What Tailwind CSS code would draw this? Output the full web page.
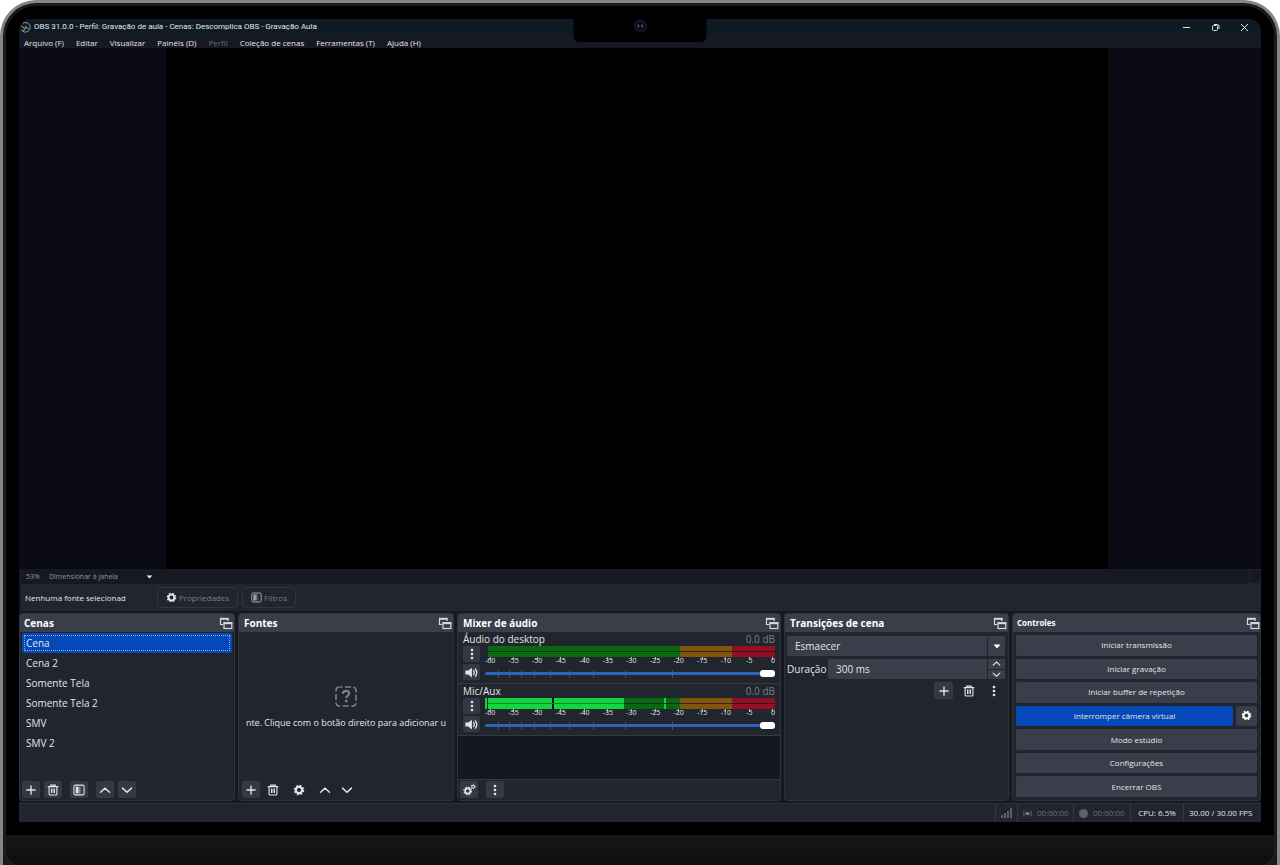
<!DOCTYPE html>
<html lang="pt-BR">
<head>
    <meta charset="UTF-8">
    <meta name="viewport" content="width=device-width, initial-scale=1.0">
    <title>OBS 31.0.0 - Perfil: Gravação de aula</title>
    <script src="https://cdn.jsdelivr.net/npm/@tailwindcss/browser@4"></script>
</head>
<body class="bg-white font-['Open_Sans','Noto_Sans',sans-serif] text-[10px] leading-4 text-[#e4e5e8]">
    <!-- Icon set -->
    <svg class="hidden">
        <symbol id="plus" viewBox="0 0 16 16"><path d="M8 2.5v11M2.5 8h11" stroke="currentColor" stroke-width="1.8" stroke-linecap="round" fill="none"/></symbol>
        <symbol id="trash" viewBox="0 0 16 16"><path d="M1.500 3.500h13M5 3V1.500h6V3M2.800 4v9.200q0 1.500 1.500 1.500h7.400q1.500 0 1.500-1.500V4" stroke="currentColor" stroke-width="1.500" stroke-linecap="round" fill="none"/><path d="M6 6v6M8 6v6M10 6v6" stroke="currentColor" stroke-width="1.300" fill="none"/></symbol>
        <symbol id="filter" viewBox="0 0 16 16"><rect x="1.200" y="1.500" width="13.600" height="13" rx="2" fill="none" stroke="currentColor" stroke-width="1.400"/><path d="M3.500 3.500h3.500v9H3.500z" fill="currentColor"/><path d="M7 3.500h2v9H7z" fill="currentColor" opacity=".6"/><path d="M9 3.500h2v9H9z" fill="currentColor" opacity=".25"/></symbol>
        <symbol id="up" viewBox="0 0 16 16"><path d="M2 11l6-5.500 6 5.500" stroke="currentColor" stroke-width="1.900" stroke-linecap="round" fill="none"/></symbol>
        <symbol id="down" viewBox="0 0 16 16"><path d="M2 5.500 8 11l6-5.500" stroke="currentColor" stroke-width="1.900" stroke-linecap="round" fill="none"/></symbol>
        <symbol id="gear" viewBox="0 0 16 16"><circle cx="8" cy="8" r="4.200" fill="none" stroke="currentColor" stroke-width="2.800"/><circle cx="8" cy="8" r="6" fill="none" stroke="currentColor" stroke-width="2" stroke-dasharray="2.600 2.112"/></symbol>
        <symbol id="gears" viewBox="0 0 16 16"><circle cx="5.800" cy="9.800" r="3.200" fill="none" stroke="currentColor" stroke-width="2"/><circle cx="5.800" cy="9.800" r="4.700" fill="none" stroke="currentColor" stroke-width="1.400" stroke-dasharray="1.900 1.791"/><circle cx="12.500" cy="4.500" r="1.700" fill="none" stroke="currentColor" stroke-width="1.300"/><circle cx="12.500" cy="4.500" r="2.700" fill="none" stroke="currentColor" stroke-width="1" stroke-dasharray="1.200 1.627"/></symbol>
        <symbol id="dots" viewBox="0 0 16 16"><g fill="currentColor"><circle cx="8" cy="2.700" r="1.800"/><circle cx="8" cy="8" r="1.800"/><circle cx="8" cy="13.300" r="1.800"/></g></symbol>
        <symbol id="speaker" viewBox="0 0 16 16"><path d="M.5 5.500H4L8.500 2v12L4 10.500H.5z" fill="currentColor"/><path d="M10.500 5.500q1.700 2.500 0 5M12.800 3.500q3.200 4.500 0 9" stroke="currentColor" stroke-width="1.600" stroke-linecap="round" fill="none"/></symbol>
        <symbol id="popout" viewBox="0 0 14 13"><path d="M4 7.500H1.500V1.500H9V4" fill="none" stroke="currentColor" stroke-width="1.200"/><path d="M1 1.800h8.500" stroke="currentColor" stroke-width="2"/><rect x="5" y="5.800" width="7.800" height="5.700" fill="none" stroke="currentColor" stroke-width="1.200"/><path d="M4.500 6.200h8.800" stroke="currentColor" stroke-width="2"/></symbol>
        <symbol id="caret" viewBox="0 0 8 5"><path d="M.5.500h7L4 4.500z" fill="currentColor"/></symbol>
    </svg>

    <!-- Laptop frame -->
    <div class="flex min-h-screen flex-col rounded-t-[36px] bg-[#858585] px-[3px] pt-[3px]">
        <div class="flex flex-1 flex-col rounded-t-[33px] bg-[#1b1b1b] px-[3px] pt-[3px]">
            <div class="flex flex-1 flex-col rounded-t-[30px] rounded-b-2xl bg-black">
                <div class="relative flex flex-1 flex-col p-[13px]">
                    <div class="absolute top-3 left-1/2 flex h-6 w-[133px] -translate-x-1/2 justify-center rounded-b-md bg-black pt-[1px]">
                        <svg class="h-[14px] w-[14px]" viewBox="0 0 14 14"><circle cx="7" cy="7" r="6.500" fill="#14161a"/><circle cx="7" cy="7" r="4" fill="#040a18"/><path d="M5 5.500v3M8.500 5.500v3" stroke="#2d5fa8" stroke-width="1.500"/></svg>
                    </div>

                    <div class="flex flex-1 flex-col rounded-t-xl bg-[#161822]">
                        <!-- Title bar -->
                        <header class="flex h-4 items-center rounded-t-xl bg-[#0f1b22] pr-3 pl-[1px] text-[8px]">
                            <svg class="mr-[3px] h-[11px] w-[11px]" viewBox="0 0 22 22" fill="none" stroke="#b9bdc1" stroke-width="1.600"><path d="M6 2.500A9.500 9.500 0 1 1 3 16"/><path d="M3 7q1 5 6 4.500 3-.5 3.500-3.500M12 11.500q4-1 5 3M11 12q0 5-6 5"/></svg>
                            <h1 class="font-['Roboto','Open_Sans',sans-serif]">OBS 31.0.0 - Perfil: Gravação de aula - Cenas: Descomplica OBS - Gravação Aula</h1>
                            <div class="ml-auto flex gap-5">
                                <button aria-label="Minimizar"><svg class="h-[9px] w-[9px]" viewBox="0 0 9 9"><path d="M1 4.500h7" stroke="#dfe3e6"/></svg></button>
                                <button aria-label="Restaurar"><svg class="h-[9px] w-[9px]" viewBox="0 0 9 9" fill="none" stroke="#dfe3e6"><rect x="1.500" y="2.500" width="5" height="5" rx="1"/><path d="M3 1.500h3.500q1.500 0 1.500 1.500v3"/></svg></button>
                                <button aria-label="Fechar"><svg class="h-[9px] w-[9px]" viewBox="0 0 9 9"><path d="m1 1 7 7M8 1 1 8" stroke="#dfe3e6"/></svg></button>
                            </div>
                        </header>
                        <nav class="flex h-[13px] items-center gap-3 px-[5px] pt-[2px] text-[8px]">
                            <a href="#">Arquivo (F)</a>
                            <a href="#">Editar</a>
                            <a href="#">Visualizar</a>
                            <a href="#">Painéis (D)</a>
                            <a href="#" class="text-[#6a6c74]">Perfil</a>
                            <a href="#">Coleção de cenas</a>
                            <a href="#">Ferramentas (T)</a>
                            <a href="#">Ajuda (H)</a>
                        </nav>

                        <!-- Preview -->
                        <main class="flex flex-1 bg-[#090a13] pr-[153px] pl-[147px]">
                            <div class="flex-1 bg-black"></div>
                        </main>
                        <div class="flex h-[15px] items-center pl-[7px] text-[7px] text-[#94969d]">
                            <span class="w-[23px]">53%</span>
                            <div class="relative flex w-[108px] items-center">
                                <select aria-label="Escala" class="w-full appearance-none">
                                    <option>Dimensionar à janela</option>
                                </select>
                                <svg class="pointer-events-none absolute right-1 h-1 w-[7px] text-white"><use href="#caret"/></svg>
                            </div>
                            <span class="ml-auto h-full w-3 border border-[#22242e]"></span>
                        </div>

                        <!-- Source toolbar -->
                        <div class="ml-[2px] flex h-[27px] items-center bg-[#20252e] pl-1 text-[8px]">
                            <span class="w-[132px]">Nenhuma fonte selecionad</span>
                            <button class="flex h-[21px] w-[81px] items-center justify-center gap-[2px] rounded-sm border border-[#2f343e] text-[#7b7e87]"><svg class="h-[11px] w-[11px] text-[#e4e5e8]"><use href="#gear"/></svg>Propriedades</button>
                            <button class="ml-1 flex h-[21px] w-[54px] items-center justify-center gap-[2px] rounded-sm border border-[#2f343e] text-[#7b7e87]"><svg class="h-[11px] w-[11px] text-[#a9abb1]"><use href="#filter"/></svg>Filtros</button>
                        </div>

                        <!-- Docks -->
                        <div class="mt-[2px] grid grid-cols-[216fr_216fr_324fr_225fr_249fr] gap-[3px]">
                            <section class="flex h-[188px] min-w-0 flex-col rounded-sm border border-[#2d323d] bg-[#20252e]">
                                <h2 class="flex h-[18px] items-center justify-between bg-[#3a3e4a] pr-[1px] pl-1 font-bold text-white">Cenas <svg class="h-[13px] w-[14px] text-[#d8d9dd]"><use href="#popout"/></svg></h2>
                                <ul class="flex-1 px-[2px] pt-[1px]">
                                    <li class="h-5 rounded-xs bg-[#0548b8] p-[2px]"><div class="flex h-4 items-center border border-dotted border-[#8fb0e8] pl-[1px]">Cena</div></li>
                                    <li class="flex h-5 items-center pl-1">Cena 2</li>
                                    <li class="flex h-5 items-center pl-1">Somente Tela</li>
                                    <li class="flex h-5 items-center pl-1">Somente Tela 2</li>
                                    <li class="flex h-5 items-center pl-1">SMV</li>
                                    <li class="flex h-5 items-center pl-1">SMV 2</li>
                                </ul>
                                <div class="flex h-[19px] gap-1 px-[2px] [&_button]:flex [&_button]:h-[17px] [&_button]:w-[18px] [&_button]:items-center [&_button]:justify-center [&_button]:rounded-xs [&_button]:bg-[#343945] [&_svg]:h-3 [&_svg]:w-3">
                                    <button aria-label="Adicionar cena"><svg><use href="#plus"/></svg></button>
                                    <button aria-label="Remover cena"><svg><use href="#trash"/></svg></button>
                                    <button class="ml-1" aria-label="Filtros da cena"><svg><use href="#filter"/></svg></button>
                                    <button class="ml-1" aria-label="Mover para cima"><svg><use href="#up"/></svg></button>
                                    <button aria-label="Mover para baixo"><svg><use href="#down"/></svg></button>
                                </div>
                            </section>

                            <section class="flex h-[188px] min-w-0 flex-col rounded-sm border border-[#2d323d] bg-[#20252e]">
                                <h2 class="flex h-[18px] items-center justify-between bg-[#3a3e4a] pr-[1px] pl-[5px] font-bold text-white">Fontes <svg class="h-[13px] w-[14px] text-[#d8d9dd]"><use href="#popout"/></svg></h2>
                                <div class="flex flex-1 flex-col items-center gap-2 pt-[54px]">
                                    <svg class="h-[21px] w-[22px] shrink-0" viewBox="0 0 22 21" fill="none" stroke="#7e8189"><rect x="1" y="1" width="20" height="19" rx="3.500" stroke-width="1.500" stroke-dasharray="6 2.500" stroke-dashoffset="3"/><path d="M7.800 7.800q.3-3 3.300-3t3.200 2.700c0 2.300-3.100 2-3.100 4.600" stroke-width="2.200"/><circle cx="11.200" cy="15" r="1.400" fill="#7e8189" stroke="none"/></svg>
                                    <p class="text-[9px] whitespace-nowrap">nte. Clique com o botão direito para adicionar u</p>
                                </div>
                                <div class="flex h-[19px] gap-1 px-[3px] [&_button]:flex [&_button]:h-[17px] [&_button]:w-[18px] [&_button]:items-center [&_button]:justify-center [&_button]:rounded-xs [&_svg]:h-3 [&_svg]:w-3">
                                    <button class="bg-[#343945]" aria-label="Adicionar fonte"><svg><use href="#plus"/></svg></button>
                                    <button aria-label="Remover fonte"><svg><use href="#trash"/></svg></button>
                                    <button class="ml-1" aria-label="Propriedades da fonte"><svg><use href="#gear"/></svg></button>
                                    <button class="ml-1" aria-label="Mover fonte para cima"><svg><use href="#up"/></svg></button>
                                    <button aria-label="Mover fonte para baixo"><svg><use href="#down"/></svg></button>
                                </div>
                            </section>

                            <section class="flex h-[188px] min-w-0 flex-col rounded-sm border border-[#2d323d] bg-[#161821]">
                                <h2 class="flex h-[18px] items-center justify-between bg-[#3a3e4a] pr-[1px] pl-[5px] font-bold text-white">Mixer de áudio <svg class="h-[13px] w-[14px] text-[#d8d9dd]"><use href="#popout"/></svg></h2>

                                <div class="h-[52px] border-b border-[#343843] bg-[#20252e] px-[5px]">
                                    <div class="flex h-[14px] items-center justify-between"><label for="desktop">Áudio do desktop</label><span class="text-[#7b7e87]">0.0 dB</span></div>
                                    <div class="flex gap-[5px]">
                                        <div class="flex flex-col gap-[2px] [&_button]:flex [&_button]:h-4 [&_button]:w-[17px] [&_button]:items-center [&_button]:justify-center [&_button]:rounded-xs [&_button]:bg-[#343945]">
                                            <button aria-label="Opções do desktop"><svg class="h-3 w-3"><use href="#dots"/></svg></button>
                                            <button aria-label="Silenciar desktop"><svg class="h-[13px] w-[13px]"><use href="#speaker"/></svg></button>
                                        </div>
                                        <div class="flex-1">
                                            <svg class="block h-[11px] w-full" viewBox="0 0 290 11" preserveAspectRatio="none">
                                                <path d="M3 0h192v11H3z" fill="#08690f"/><path d="M195 0h52v11h-52z" fill="#80560a"/><path d="M247 0h43v11h-43z" fill="#930f22"/>
                                                <path d="M3 5.500h287" stroke="#12151c" stroke-opacity=".7"/>
                                            </svg>
                                            <div class="flex h-2 justify-between pr-[2px] pl-[5px] text-[7px] leading-[8px] [&>span]:relative [&>span]:flex [&>span]:w-0 [&>span]:justify-center [&>span]:before:absolute [&>span]:before:h-[3px] [&>span]:before:w-px [&>span]:before:bg-[#b4b6bb]">
                                                <span>-60</span><span>-55</span><span>-50</span><span>-45</span><span>-40</span><span>-35</span><span>-30</span><span>-25</span><span>-20</span><span>-15</span><span>-10</span><span>-5</span><span>0</span>
                                            </div>
                                            <div class="relative mt-[3px] flex h-[11px] items-center">
                                                <svg class="absolute h-2 w-full" viewBox="0 0 290 8" preserveAspectRatio="none"><path d="M13.500 0v8M24.500 0v8M36.500 0v8M49.500 0v8M65.500 0v8M84.500 0v8M108.500 0v8M140.500 0v8M187.500 0v8" stroke="#4a4f5a"/></svg>
                                                <input id="desktop" type="range" value="100" class="relative h-[3px] w-full appearance-none rounded-full bg-[#2f62bd] [&::-webkit-slider-thumb]:h-[7px] [&::-webkit-slider-thumb]:w-[15px] [&::-webkit-slider-thumb]:appearance-none [&::-webkit-slider-thumb]:rounded-[3px] [&::-webkit-slider-thumb]:bg-white">
                                            </div>
                                        </div>
                                    </div>
                                </div>

                                <div class="h-[52px] border-b border-[#343843] bg-[#20252e] px-[5px]">
                                    <div class="flex h-[14px] items-center justify-between"><label for="mic">Mic/Aux</label><span class="text-[#7b7e87]">0.0 dB</span></div>
                                    <div class="flex gap-[5px]">
                                        <div class="flex flex-col gap-[2px] [&_button]:flex [&_button]:h-4 [&_button]:w-[17px] [&_button]:items-center [&_button]:justify-center [&_button]:rounded-xs [&_button]:bg-[#343945]">
                                            <button aria-label="Opções do microfone"><svg class="h-3 w-3"><use href="#dots"/></svg></button>
                                            <button aria-label="Silenciar microfone"><svg class="h-[13px] w-[13px]"><use href="#speaker"/></svg></button>
                                        </div>
                                        <div class="flex-1">
                                            <svg class="block h-[11px] w-full" viewBox="0 0 290 11" preserveAspectRatio="none">
                                                <path d="M3 0h192v11H3z" fill="#08690f"/><path d="M195 0h52v11h-52z" fill="#80560a"/><path d="M247 0h43v11h-43z" fill="#930f22"/>
                                                <path d="M0 0h2v11H0zM3 0h136v11H3zM179 0h2v11h-2z" fill="#10d63f"/><path d="M67 0h2v11h-2z" fill="#05080a"/>
                                                <path d="M3 5.500h136" stroke="#0a8a2a"/><path d="M139 5.500h151" stroke="#12151c" stroke-opacity=".7"/>
                                            </svg>
                                            <div class="flex h-2 justify-between pr-[2px] pl-[5px] text-[7px] leading-[8px] [&>span]:relative [&>span]:flex [&>span]:w-0 [&>span]:justify-center [&>span]:before:absolute [&>span]:before:h-[3px] [&>span]:before:w-px [&>span]:before:bg-[#b4b6bb]">
                                                <span>-60</span><span>-55</span><span>-50</span><span>-45</span><span>-40</span><span>-35</span><span>-30</span><span>-25</span><span>-20</span><span>-15</span><span>-10</span><span>-5</span><span>0</span>
                                            </div>
                                            <div class="relative mt-[3px] flex h-[11px] items-center">
                                                <svg class="absolute h-2 w-full" viewBox="0 0 290 8" preserveAspectRatio="none"><path d="M13.500 0v8M24.500 0v8M36.500 0v8M49.500 0v8M65.500 0v8M84.500 0v8M108.500 0v8M140.500 0v8M187.500 0v8" stroke="#4a4f5a"/></svg>
                                                <input id="mic" type="range" value="100" class="relative h-[3px] w-full appearance-none rounded-full bg-[#2f62bd] [&::-webkit-slider-thumb]:h-[7px] [&::-webkit-slider-thumb]:w-[15px] [&::-webkit-slider-thumb]:appearance-none [&::-webkit-slider-thumb]:rounded-[3px] [&::-webkit-slider-thumb]:bg-white">
                                            </div>
                                        </div>
                                    </div>
                                </div>

                                <div class="mt-auto flex h-[21px] gap-2 border-t border-[#343843] bg-[#20252e] px-[2px] pt-[1px] [&_button]:flex [&_button]:h-[17px] [&_button]:w-[18px] [&_button]:items-center [&_button]:justify-center [&_button]:rounded-xs [&_button]:bg-[#343945]">
                                    <button aria-label="Propriedades avançadas de áudio"><svg class="h-[13px] w-[13px]"><use href="#gears"/></svg></button>
                                    <button aria-label="Menu do mixer"><svg class="h-3 w-3"><use href="#dots"/></svg></button>
                                </div>
                            </section>

                            <section class="flex h-[188px] min-w-0 flex-col rounded-sm border border-[#2d323d] bg-[#20252e]">
                                <h2 class="flex h-[18px] items-center justify-between bg-[#3a3e4a] pr-[1px] pl-[5px] font-bold text-white">Transições de cena <svg class="h-[13px] w-[14px] text-[#d8d9dd]"><use href="#popout"/></svg></h2>
                                <div class="flex flex-col gap-[3px] pt-1 pr-[3px] pl-[2px]">
                                    <div class="relative flex items-center">
                                        <select aria-label="Transição" class="h-5 w-full appearance-none rounded-xs bg-[#3a3e4a] pl-2">
                                            <option>Esmaecer</option>
                                        </select>
                                        <span class="pointer-events-none absolute right-0 flex h-5 w-[18px] items-center justify-center border-l border-[#20252e]"><svg class="h-[5px] w-2 text-white"><use href="#caret"/></svg></span>
                                    </div>
                                    <div class="flex items-center">
                                        <label for="duration" class="w-[41px] shrink-0">Duração</label>
                                        <input id="duration" type="text" value="300 ms" class="h-5 min-w-0 flex-1 rounded-l-xs bg-[#3a3e4a] pl-2">
                                        <div class="ml-[1px] flex h-5 w-[17px] flex-col gap-[1px] [&_button]:flex [&_button]:flex-1 [&_button]:items-center [&_button]:justify-center [&_button]:bg-[#3a3e4a]">
                                            <button aria-label="Aumentar"><svg class="h-[9px] w-[9px]"><use href="#up"/></svg></button>
                                            <button aria-label="Diminuir"><svg class="h-[9px] w-[9px]"><use href="#down"/></svg></button>
                                        </div>
                                    </div>
                                    <div class="flex justify-end gap-[6px] pr-[2px] [&_button]:flex [&_button]:h-[17px] [&_button]:w-[19px] [&_button]:items-center [&_button]:justify-center [&_button]:rounded-xs [&_svg]:h-3 [&_svg]:w-3">
                                        <button class="bg-[#343945]" aria-label="Adicionar transição"><svg><use href="#plus"/></svg></button>
                                        <button aria-label="Remover transição"><svg><use href="#trash"/></svg></button>
                                        <button aria-label="Menu da transição"><svg><use href="#dots"/></svg></button>
                                    </div>
                                </div>
                            </section>

                            <section class="flex h-[188px] min-w-0 flex-col rounded-sm border border-[#2d323d] bg-[#20252e]">
                                <h2 class="flex h-[18px] items-center justify-between bg-[#3a3e4a] pl-1 text-[8px] font-bold text-white">Controles <svg class="h-[13px] w-[14px] text-[#d8d9dd]"><use href="#popout"/></svg></h2>
                                <div class="grid flex-1 auto-rows-fr gap-[3px] p-[3px] text-[8px] [&_button]:rounded-xs">
                                    <button class="bg-[#3a3e4a]">Iniciar transmissão</button>
                                    <button class="bg-[#3a3e4a]">Iniciar gravação</button>
                                    <button class="bg-[#3a3e4a]">Iniciar buffer de repetição</button>
                                    <div class="flex gap-[3px]">
                                        <button class="flex-1 bg-[#0548b8]">Interromper câmera virtual</button>
                                        <button class="flex w-[21px] items-center justify-center bg-[#3a3e4a] text-white" aria-label="Configurar câmera virtual"><svg class="h-[11px] w-[11px]"><use href="#gear"/></svg></button>
                                    </div>
                                    <button class="bg-[#3a3e4a]">Modo estúdio</button>
                                    <button class="bg-[#3a3e4a]">Configurações</button>
                                    <button class="bg-[#3a3e4a]">Encerrar OBS</button>
                                </div>
                            </section>
                        </div>

                        <!-- Status bar -->
                        <footer class="mt-[2px] flex h-[19px] justify-end border-t border-[#2b303b] bg-[#20252e] text-[8px] [&>div]:flex [&>div]:items-center [&>div]:border-l [&>div]:border-[#343843]">
                            <div class="w-[22px] justify-center"><svg class="h-[10px] w-[11px]" viewBox="0 0 11 10" fill="#5d6068"><path d="M0 7h2v3H0zM3 5h2v5H3zM6 3h2v7H6zM9 0h2v10H9z"/></svg></div>
                            <div class="w-14 gap-[5px] pl-[5px] text-[#6d7079]"><svg class="h-[9px] w-[9px]" viewBox="0 0 10 10" fill="none" stroke="#6d7079" stroke-width=".7"><circle cx="5" cy="5" r="1.800" fill="#8d9098" stroke="none"/><path d="M2.500 2.500q-1.500 2.500 0 5M7.500 2.500q1.500 2.500 0 5M1 1.500q-1.500 3.500 0 7M9 1.500q1.500 3.500 0 7"/></svg>00:00:00</div>
                            <div class="w-[57px] gap-[5px] pl-[5px] text-[#6d7079]"><span class="h-[9px] w-[9px] rounded-full bg-[#5d6068]"></span>00:00:00</div>
                            <div class="w-[53px] justify-center">CPU: 6.5%</div>
                            <div class="w-[78px] pl-[5px]">30.00 / 30.00 FPS</div>
                        </footer>
                    </div>
                </div>
                <div class="h-[30px] rounded-b-2xl bg-linear-to-b from-[#161616] to-[#0e0e0e]"></div>
            </div>
        </div>
    </div>
</body>
</html>
